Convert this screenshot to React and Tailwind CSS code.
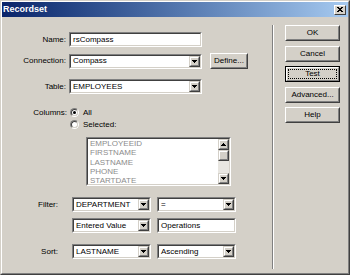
import React from 'react'

function Field({ className = '', children }) {
  return (
    <div className={`h-[15px] border border-t-[#808080] border-l-[#808080] border-r-white border-b-white ${className}`}>
      <div className="h-full border border-t-[#404040] border-l-[#404040] border-r-[#d4d0c8] border-b-[#d4d0c8] bg-white flex items-center overflow-hidden">
        {children}
      </div>
    </div>
  )
}

function Arrow({ up }) {
  return (
    <svg width="5" height="3" viewBox="0 0 5 3" shapeRendering="crispEdges">
      {up ? <path d="M2 0h1v1h1v1h1v1H0V2h1V1h1z" fill="#000" /> : <path d="M0 0h5v1H4v1H3v1H2V2H1V1H0z" fill="#000" />}
    </svg>
  )
}

function ArrowBtn({ up, className = 'h-full' }) {
  return (
    <div className={`w-[11px] shrink-0 border border-t-[#d4d0c8] border-l-[#d4d0c8] border-r-[#404040] border-b-[#404040] ${className}`}>
      <div className="h-full border border-t-white border-l-white border-r-[#808080] border-b-[#808080] bg-[#d4d0c8] flex items-center justify-center">
        <Arrow up={up} />
      </div>
    </div>
  )
}

function Select({ className = '', value }) {
  return (
    <Field className={className}>
      <span className="flex-1 pl-[2px] whitespace-nowrap">{value}</span>
      <ArrowBtn />
    </Field>
  )
}

function Btn({ className = '', children }) {
  return (
    <div className={`h-[16px] border border-t-white border-l-white border-r-[#404040] border-b-[#404040] ${className}`}>
      <div className="h-full border border-t-[#d4d0c8] border-l-[#d4d0c8] border-r-[#808080] border-b-[#808080] flex items-center justify-center">
        {children}
      </div>
    </div>
  )
}

function Radio({ checked }) {
  return (
    <div className="w-[9px] h-[9px] rounded-full border border-t-[#808080] border-l-[#808080] border-r-white border-b-white shrink-0">
      <div className="w-full h-full rounded-full border border-t-[#404040] border-l-[#404040] border-r-[#d4d0c8] border-b-[#d4d0c8] bg-white flex items-center justify-center">
        {checked && <div className="w-[3px] h-[3px] rounded-full bg-black" />}
      </div>
    </div>
  )
}

const columns = ['EMPLOYEEID', 'FIRSTNAME', 'LASTNAME', 'PHONE', 'STARTDATE']

export default function App() {
  return (
    <div className="w-[350px] h-[275px] bg-[#d4d0c8] text-black text-[8px] leading-none font-['Liberation_Sans',Arial,sans-serif] border border-t-[#d4d0c8] border-l-[#d4d0c8] border-r-[#404040] border-b-[#404040] flex flex-col">
      <div className="flex-1 flex flex-col border border-t-white border-l-white border-r-[#808080] border-b-[#808080]">
        <div className="h-[15px] bg-linear-to-r from-[#0a246a] to-[#a6caf0] flex items-center justify-between pl-[1px] pr-[2px]">
          <span className="text-white font-bold text-[9px]">Recordset</span>
          <div className="w-[12px] h-[10px] border border-t-white border-l-white border-r-[#404040] border-b-[#404040] bg-[#d4d0c8] flex items-center justify-center">
            <svg width="6" height="5" viewBox="0 0 6 5" shapeRendering="crispEdges">
              <path d="M0 0h2v1h2V0h2v1H5v1H4v1h1v1h1v1H4V4H2v1H0V4h1V3h1V2H1V1H0z" fill="#000" />
            </svg>
          </div>
        </div>

        <div className="flex-1 flex">
          <div className="w-[270px] flex flex-col">
            <div className="flex items-center mt-[15px]">
              <span className="w-[64px] text-right">Name:</span>
              <Field className="w-[133px] ml-[3px]"><span className="pl-[2px]">rsCompass</span></Field>
            </div>
            <div className="flex items-center mt-[6px]">
              <span className="w-[64px] text-right">Connection:</span>
              <Select className="w-[133px] ml-[3px]" value="Compass" />
              <Btn className="w-[38px] ml-[8px] h-[15px]">Define...</Btn>
            </div>
            <div className="flex items-center mt-[10px]">
              <span className="w-[64px] text-right">Table:</span>
              <Select className="w-[133px] ml-[3px]" value="EMPLOYEES" />
            </div>

            <div className="flex items-center mt-[14px] h-[9px]">
              <span className="w-[65px] text-right">Columns:</span>
              <div className="ml-[3px]"><Radio checked /></div>
              <span className="ml-[4px]">All</span>
            </div>
            <div className="flex items-center mt-[3px] pl-[68px] h-[9px]">
              <Radio />
              <span className="ml-[4px]">Selected:</span>
            </div>

            <Field className="!h-[49px] w-[145px] ml-[84px] mt-[8px]">
              <div className="h-full flex-1 flex flex-col pl-[2px] text-[#8c8c8c] leading-[9.25px]">
                {columns.map(c => <span key={c}>{c}</span>)}
              </div>
              <div className="h-full w-[11px] flex flex-col bg-[#e8e6e1]">
                <ArrowBtn up className="h-[11px]" />
                <div className="w-[11px] h-[11px] border border-t-[#d4d0c8] border-l-[#d4d0c8] border-r-[#404040] border-b-[#404040]">
                  <div className="h-full border border-t-white border-l-white border-r-[#808080] border-b-[#808080] bg-[#d4d0c8]" />
                </div>
                <div className="flex-1" />
                <ArrowBtn className="h-[11px]" />
              </div>
            </Field>

            <div className="flex items-center mt-[11px]">
              <span className="w-[56px] text-right">Filter:</span>
              <Select className="w-[79px] ml-[14px]" value="DEPARTMENT" />
              <Select className="w-[79px] ml-[6px]" value="=" />
            </div>
            <div className="flex items-center mt-[6px] pl-[70px]">
              <Select className="w-[79px]" value="Entered Value" />
              <Field className="w-[79px] ml-[6px]"><span className="pl-[2px]">Operations</span></Field>
            </div>
            <div className="flex items-center mt-[11px]">
              <span className="w-[56px] text-right">Sort:</span>
              <Select className="w-[79px] ml-[14px]" value="LASTNAME" />
              <Select className="w-[79px] ml-[6px]" value="Ascending" />
            </div>
          </div>

          <div className="w-[2px] mt-[8px] mb-[4px] border-l border-l-[#808080] border-r border-r-white" />

          <div className="flex flex-col pl-[11px] w-[66px]">
            <Btn className="w-[55px] mt-[8px]">OK</Btn>
            <Btn className="w-[55px] mt-[5px]">Cancel</Btn>
            <div className="w-[55px] h-[16px] mt-[4px] border border-black">
              <div className="h-full border border-t-white border-l-white border-r-[#808080] border-b-[#808080] p-[1px]">
                <div className="h-full border border-dotted border-black flex items-center justify-center">Test</div>
              </div>
            </div>
            <Btn className="w-[55px] mt-[5px]">Advanced...</Btn>
            <Btn className="w-[55px] mt-[4px]">Help</Btn>
          </div>
        </div>
      </div>
    </div>
  )
}
